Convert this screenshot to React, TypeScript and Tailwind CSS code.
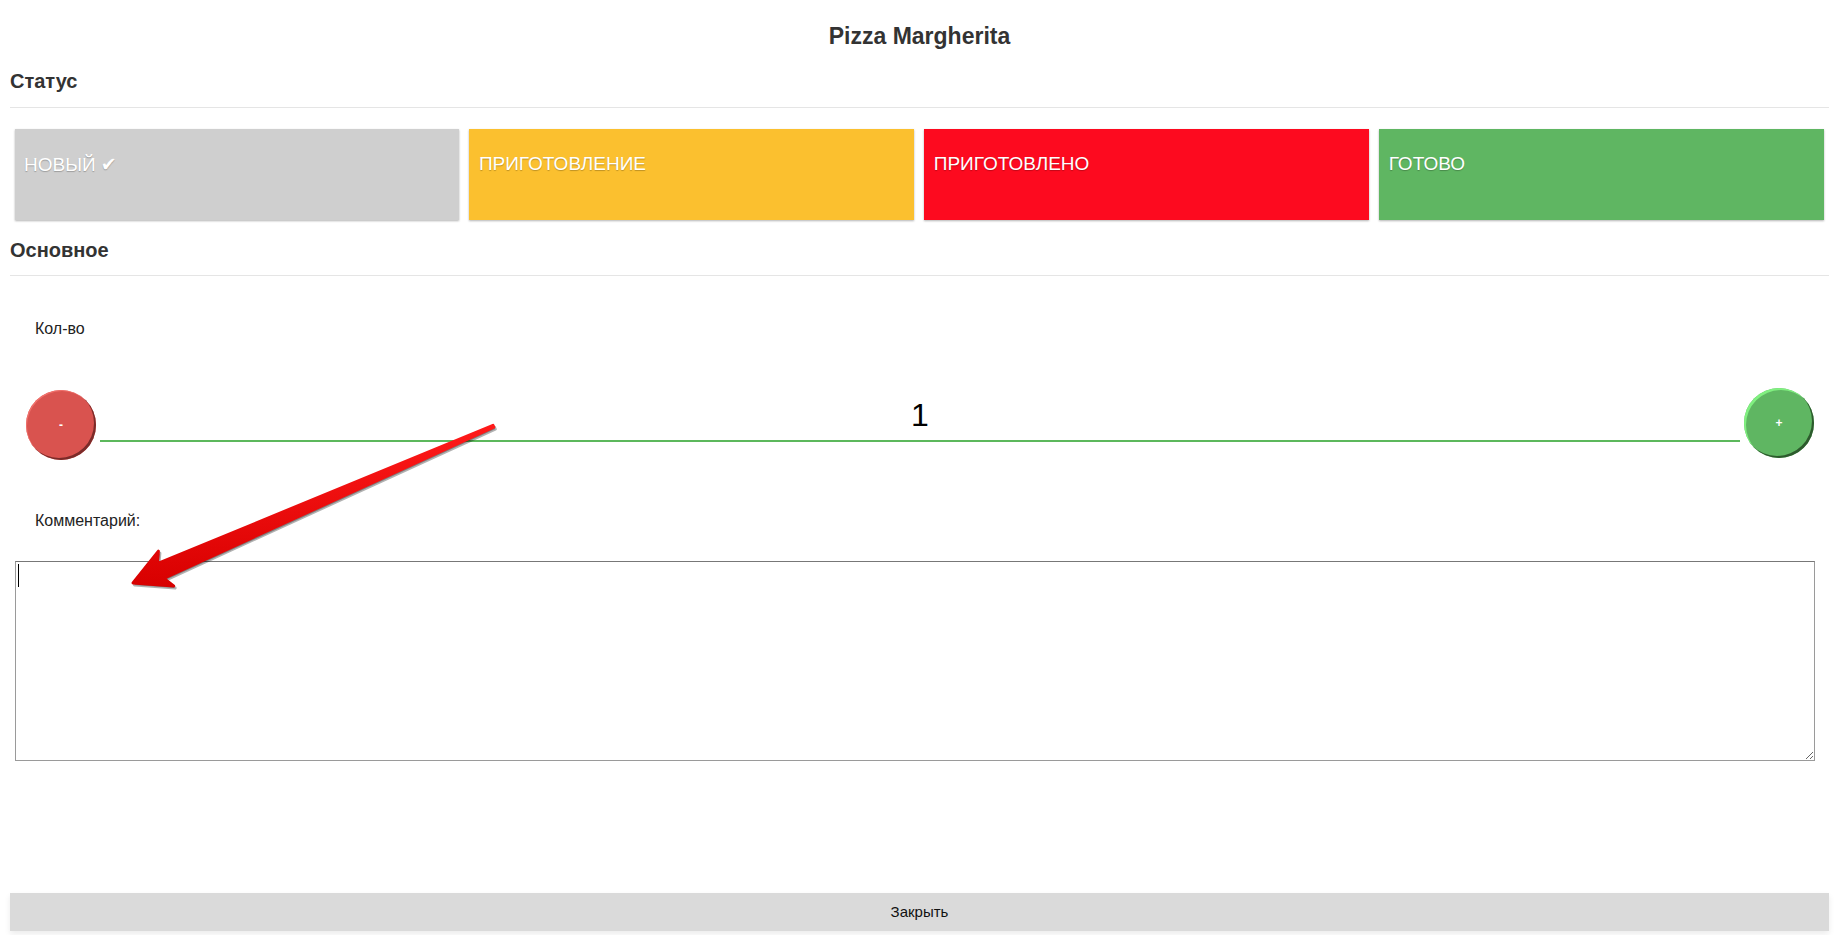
import React from 'react';

const statuses = [
  { label: 'НОВЫЙ', check: true, className: 'bg-[#cfcfcf]' },
  { label: 'ПРИГОТОВЛЕНИЕ', check: false, className: 'bg-[#fbc02f]' },
  { label: 'ПРИГОТОВЛЕНО', check: false, className: 'bg-[#fd0a1f]' },
  { label: 'ГОТОВО', check: false, className: 'bg-[#5fb662]' },
];

// red annotation arrow laid over the form
const Arrow = () => (
  <svg
    className="absolute top-0 left-0 pointer-events-none"
    width={1838}
    height={935}
    viewBox="0 0 1838 935"
  >
    <defs>
      <linearGradient id="arrowFill" x1="0" y1="0" x2="0" y2="1">
        <stop offset="0" stopColor="#ff1a1a" />
        <stop offset="1" stopColor="#d80000" />
      </linearGradient>
    </defs>
    <polygon
      points="493,425.3 493.8,427.1 163.7,578.3 173.6,586 133,583 158.4,551.2 157.3,563.7"
      transform="translate(1.5 2)"
      fill="rgba(0,0,0,0.3)"
      stroke="rgba(0,0,0,0.3)"
      strokeWidth={3}
      strokeLinejoin="round"
    />
    <polygon
      points="493,425.3 493.8,427.1 163.7,578.3 173.6,586 133,583 158.4,551.2 157.3,563.7"
      fill="url(#arrowFill)"
      stroke="url(#arrowFill)"
      strokeWidth={3}
      strokeLinejoin="round"
    />
  </svg>
);

const App = () => {
  return (
    <div className="relative h-screen overflow-hidden bg-white pl-[10px] pr-[9px] font-['Liberation_Sans',Arial,sans-serif] text-[#333]">
      <h1 className="mt-[22px] text-center text-[23px] leading-[28px] font-bold text-[#333]">
        Pizza Margherita
      </h1>

      {/* Status */}
      <h2 className="mt-[19px] text-[20px] leading-[24px] font-bold">Статус</h2>
      <div className="mt-[14px] border-t border-[#e5e5e5]" />
      <div className="mt-[21px] grid grid-cols-4 gap-[10px] pl-[4.5px] pr-[5px]">
        {statuses.map(s => (
          <div
            key={s.label}
            className={`${s.className} h-[91px] pl-[9.5px] pt-[24px] text-[19px] leading-[22px] text-white shadow-[0_1px_2px_rgba(0,0,0,0.3)] [text-shadow:0_1px_1px_rgba(0,0,0,0.25)]`}
          >
            {s.label}
            {s.check && (
              <span className="ml-[5px] font-['DejaVu_Sans',sans-serif] text-[19px]">✔</span>
            )}
          </div>
        ))}
      </div>

      {/* Main */}
      <h2 className="mt-[18px] text-[20px] leading-[24px] font-bold">Основное</h2>
      <div className="mt-[13px] border-t border-[#e5e5e5]" />

      <div className="mt-[43px] ml-[25px] text-[16px] leading-[20px] text-[#222]">Кол-во</div>

      <div className="mt-[51px] flex items-start gap-[4px] pl-[16px] pr-[15px]">
        <button className="flex h-[70px] w-[70px] shrink-0 items-center justify-center rounded-full bg-[#d9534f] text-[12px] font-bold text-white shadow-[inset_-2px_-2px_0_#7b2b29,inset_1px_1px_0_#f0706b]">
          -
        </button>
        <input
          className="h-[52px] min-w-0 flex-1 border-b-2 border-[#5cb85c] text-center text-[32px] text-black outline-none"
          defaultValue="1"
        />
        <button className="-mt-[2px] flex h-[70px] w-[70px] shrink-0 items-center justify-center rounded-full bg-[#5fb662] text-[12px] font-bold text-white shadow-[inset_-2px_-2px_0_#2d5a2d,inset_2px_2px_0_#80f080]">
          +
        </button>
      </div>

      <div className="mt-[51px] ml-[25px] text-[16px] leading-[20px] text-[#222]">Комментарий:</div>

      <div className="relative mt-[30px] ml-[5px] w-[1800px]">
        <textarea className="block h-[200px] w-full border border-[#9a9a9a] border-t-[#777] p-[2px] text-[14px] outline-none" />
        {/* text caret of the focused field */}
        <span className="absolute top-[3px] left-[3px] h-[23px] w-px bg-black" />
      </div>

      <button className="mt-[132px] block h-[38px] w-full bg-[#dadada] text-[15px] text-[#111] shadow-[0_3px_6px_rgba(0,0,0,0.08)]">
        Закрыть
      </button>

      <Arrow />
    </div>
  );
};

export default App;
